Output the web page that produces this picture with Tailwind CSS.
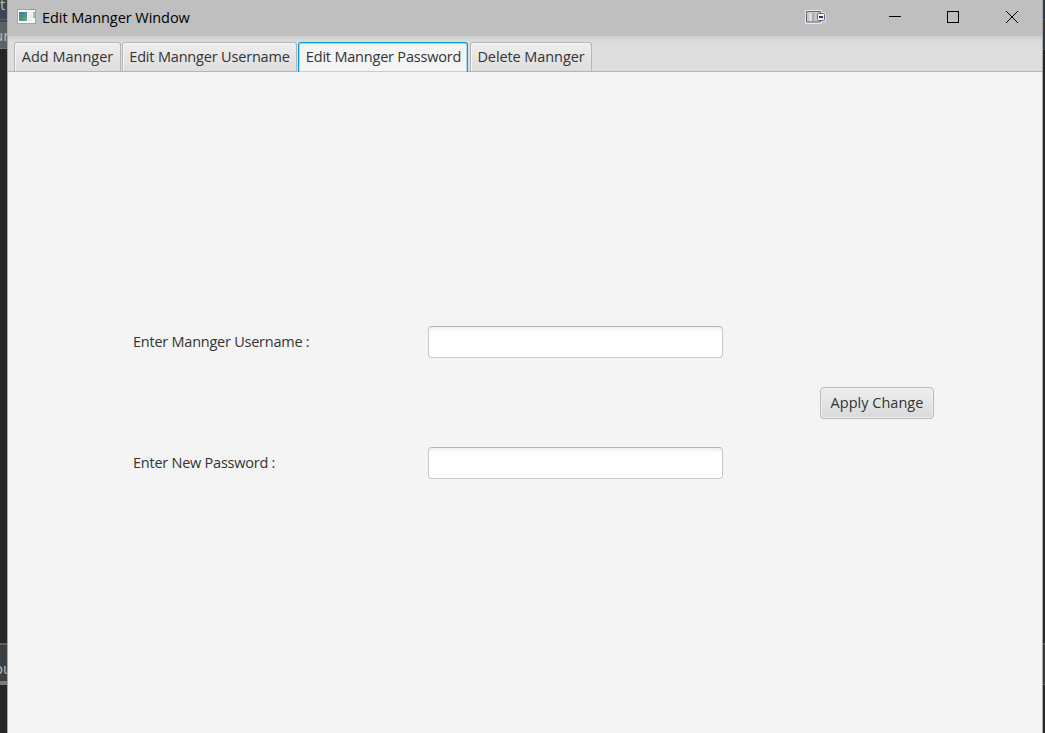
<!DOCTYPE html>
<html lang="en">
<head>
<meta charset="utf-8">
<title>Edit Mannger Window</title>
<script src="https://cdn.jsdelivr.net/npm/@tailwindcss/browser@4"></script>
</head>
<body class="flex h-[733px] w-[1045px] overflow-hidden bg-[#2b2b2b] font-['Open_Sans','Noto_Sans',sans-serif] text-[14.5px] text-[#333333]">
  <!-- Window behind, left edge -->
  <div class="flex w-[7px] shrink-0 flex-col overflow-hidden bg-[#262626] text-[15px] leading-[18px] text-[#bbbbbb]">
    <div class="h-[19px] bg-[#3b4754]"><div class="-mt-[5px]">t</div></div>
    <div class="h-px bg-[#5d6265]"></div>
    <div class="h-[2px] bg-[#45494b]"></div>
    <div class="h-[26px] overflow-hidden bg-[#5c6164] pt-[4px]"><div class="-ml-[6px] whitespace-nowrap">ur</div></div>
    <div class="h-px bg-[#777777]"></div>
    <div class="h-[594px]"></div>
    <div class="h-[2px] bg-[#606060]"></div>
    <div class="h-[36px] overflow-hidden bg-[#3c3f41] pt-[14px]"><div class="-ml-[6px] whitespace-nowrap">ou</div></div>
    <div class="h-[4px] bg-[#7d7d7d]"></div>
  </div>

  <main class="flex w-[1036px] shrink-0 flex-col border-x border-[#a9a9a9] bg-[#f4f4f4]">
    <header class="flex h-[36px] shrink-0 items-center bg-[#bfbfbf] pl-[9px] text-black">
      <svg class="-mt-[3px] shrink-0" width="20" height="17" viewBox="0 0 20 17">
        <defs><linearGradient id="g" x1="0" y1="0" x2="1" y2="1"><stop offset="0" stop-color="#3f74a0"/><stop offset="1" stop-color="#5eb07a"/></linearGradient></defs>
        <rect x=".5" y="1.5" width="18" height="14" fill="#f8f8f8" stroke="#a3a3a8"/>
        <rect x="2" y="4" width="8" height="9" fill="url(#g)"/>
        <rect x="11" y="4" width="4" height="9" fill="#eeeeee"/>
        <rect x="16" y="4" width="2" height="6" fill="#9dbdac"/><rect x="13" y="1" width="5" height="1" fill="#85929d"/>
      </svg>
      <h1 class="-mt-px ml-[5px] w-[160px] whitespace-nowrap font-normal tracking-[-0.06px]">Edit Mannger Window</h1>
      <svg class="-mt-[2px] ml-[603px] shrink-0" width="22" height="14" viewBox="0 0 22 14">
        <rect x="0" y="0" width="17" height="14" rx="1" fill="#e6e6e6"/>
        <rect x="11" y="2" width="10" height="10" rx="1.500" fill="#dedee2"/>
        <path d="M15.500 3V1.500H1.500v10.500h14V11" fill="#c6c6ca" stroke="#666680"/>
        <rect x="4" y="3" width="3" height="8" fill="#dedede"/><rect x="7" y="3" width="2" height="8" fill="#aaaaaa"/>
        <rect x="12.500" y="3.500" width="7" height="7" rx="1" fill="#f3f3f3" stroke="#66668a"/>
        <rect x="14" y="6" width="4" height="2" fill="#30304b"/>
      </svg>
      <svg class="ml-[62px] shrink-0" width="132" height="36" viewBox="0 0 132 36" fill="none" stroke="#000">
        <path d="M0 16.500h12" shape-rendering="crispEdges"/>
        <rect x="58.500" y="11.500" width="11" height="11" shape-rendering="crispEdges"/>
        <path d="M117 11l12 12M129 11l-12 12"/>
      </svg>
    </header>

    <nav class="flex h-[36px] shrink-0 items-end gap-[2px] border-b border-[#b5b5b5] bg-[linear-gradient(#cdcdcd,#dddddd_6px)] pl-[6px] whitespace-nowrap">
      <div class="flex h-[29px] w-[107px] justify-center rounded-t-[3px] border border-b-0 border-[#b7b7b7] bg-linear-to-b from-[#eeeeee] to-[#dddddd] pt-[4px] leading-[20px] inset-shadow-[1px_1px_0_#f6f6f6]"><span>Add Mannger</span></div>
      <div class="-ml-px flex h-[29px] w-[175px] justify-center rounded-t-[3px] border border-b-0 border-[#b7b7b7] bg-linear-to-b from-[#eeeeee] to-[#dddddd] pt-[4px] leading-[20px] inset-shadow-[1px_1px_0_#f6f6f6]"><span class="tracking-[-0.18px]">Edit Mannger Username</span></div>
      <div class="-mb-px -ml-px flex h-[30px] w-[170px] justify-center rounded-t-[3px] border border-b-0 border-[#039ed3] bg-[#f4f4f4] pt-[4px] pl-px leading-[20px] inset-shadow-[0_0_0_1px_#a6d9ec]"><span class="tracking-[-0.2px]">Edit Mannger Password</span></div>
      <div class="flex h-[29px] w-[122px] justify-center rounded-t-[3px] border border-b-0 border-[#b7b7b7] bg-linear-to-b from-[#eeeeee] to-[#dddddd] pt-[4px] leading-[20px] inset-shadow-[1px_1px_0_#f6f6f6]"><span class="tracking-[-0.08px]">Delete Mannger</span></div>
    </nav>

    <form class="flex items-center pt-[254px] pl-[125px]">
      <div class="grid grid-cols-[295px_295px] items-center gap-y-[89px]">
        <label for="u" class="whitespace-nowrap tracking-[-0.24px]">Enter Mannger Username :</label>
        <input id="u" class="h-[32px] w-[295px] rounded-[4px] border border-[#c8c8c8] border-t-[#b5b5b5] bg-[linear-gradient(#f0f0f0,#ffffff_5px)] px-2">
        <label for="p" class="whitespace-nowrap tracking-[-0.24px]">Enter New Password :</label>
        <input id="p" type="password" class="h-[32px] w-[295px] rounded-[4px] border border-[#c8c8c8] border-t-[#b5b5b5] bg-[linear-gradient(#f0f0f0,#ffffff_5px)] px-2">
      </div>
      <button type="button" class="ml-[97px] h-[32px] w-[114px] rounded-[4px] border border-[#b9b9b9] bg-linear-to-b from-[#eeeeee] to-[#dadada] whitespace-nowrap tracking-[0.02px] inset-shadow-[0_0_0_1px_#f0f0f0]">Apply Change</button>
    </form>
  </main>

  <!-- Window behind, right edge -->
  <div class="flex w-[2px] shrink-0 flex-col bg-[#242628]">
    <div class="h-[19px] bg-[#2b3a4b]"></div>
    <div class="h-px bg-[#555555]"></div>
    <div class="h-[29px] bg-[#35383a]"></div>
    <div class="h-px bg-[#555555]"></div>
    <div class="h-[593px]"></div>
    <div class="h-[2px] bg-[#555555]"></div>
    <div class="h-[39px] bg-[#353739]"></div>
    <div class="h-px bg-[#666666]"></div>
  </div>
</body>
</html>
